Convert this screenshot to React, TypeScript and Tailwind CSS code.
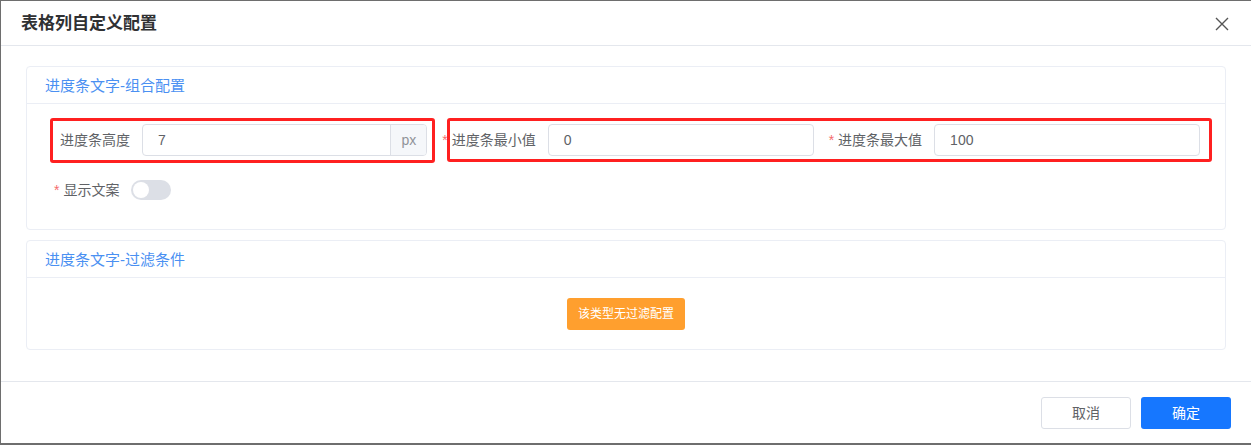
import React from "react";

const font = { fontFamily: '"Liberation Sans", "Noto Sans CJK SC", sans-serif' };

const Star = () => <span className="mr-[4px] text-[#f56c6c]">*</span>;

const TextInput = ({ value, suffix }: { value: string; suffix?: string }) => (
  <div className="flex h-[32px] flex-1 overflow-hidden rounded-[4px] border border-[#dcdfe6] bg-white">
    <div className="flex flex-1 items-center px-[15px] text-[14px] text-[#606266]">{value}</div>
    {suffix && (
      <div className="flex w-[36px] items-center justify-center border-l border-[#dcdfe6] bg-[#f5f7fa] text-[14px] text-[#909399]">
        {suffix}
      </div>
    )}
  </div>
);

const FormItem = ({
  label,
  required,
  value,
  suffix,
  offset,
}: {
  label: string;
  required?: boolean;
  value: string;
  suffix?: string;
  offset: string;
}) => (
  <div className={`flex h-[32px] items-center pr-[13px] ${offset}`}>
    <label className="flex items-center pr-[12px] text-[14px] text-[#606266]">
      {required && <Star />}
      {label}
    </label>
    <TextInput value={value} suffix={suffix} />
  </div>
);

const Card = ({ title, children }: { title: string; children: React.ReactNode }) => (
  <div className="rounded-[4px] border border-[#ebeef5] bg-white">
    <div className="flex h-[37px] items-center border-b border-[#ebeef5] pl-[18px] pt-[2px] text-[15px] text-[#4a90f2]">
      {title}
    </div>
    {children}
  </div>
);

export default function App() {
  return (
    <div className="h-[445px] w-[1251px] bg-[#6e6e6e] pl-px pt-px" style={font}>
      <div className="flex h-[442px] w-[1250px] flex-col bg-white">
        <div className="flex h-[45px] items-center justify-between border-b border-[#e4e7ed] pl-[20px] pr-[22px] pt-[2px]">
          <h2 className="text-[17px] font-bold text-[#303133]">表格列自定义配置</h2>
          <svg width="14" height="14" viewBox="0 0 14 14" className="text-[#555]">
            <path d="M1 1L13 13M13 1L1 13" stroke="currentColor" strokeWidth="1.4" />
          </svg>
        </div>

        <div className="flex flex-1 flex-col gap-[10px] border-b border-[#e4e7ed] px-[25px] pt-[20px]">
          <Card title="进度条文字-组合配置">
            <div className="pb-[23px] pl-[27px] pr-[12px] pt-[20px]">
              <div className="relative grid grid-cols-3">
                <FormItem label="进度条高度" value="7" suffix="px" offset="pl-[6px]" />
                <FormItem label="进度条最小值" required value="0" offset="pl-[2px]" />
                <FormItem label="进度条最大值" required value="100" offset="pl-[2px]" />
                <div className="pointer-events-none absolute left-[-4px] top-[-6px] h-[45px] w-[385px] rounded-[3px] border-[3px] border-[#ff2020]" />
                <div className="pointer-events-none absolute left-[393px] top-[-6px] h-[44px] w-[765px] rounded-[3px] border-[3px] border-[#ff2020]" />
              </div>
              <div className="mt-[18px] flex h-[32px] items-center">
                <label className="flex items-center text-[14px] text-[#606266]">
                  <Star />
                  显示文案
                </label>
                <div className="ml-[12px] flex h-[20px] w-[40px] items-center rounded-full bg-[#dcdfe6] px-[2px]">
                  <div className="h-[16px] w-[16px] rounded-full bg-white" />
                </div>
              </div>
            </div>
          </Card>

          <Card title="进度条文字-过滤条件">
            <div className="flex justify-center pb-[19px] pt-[20px]">
              <button className="h-[32px] w-[118px] rounded-[3px] bg-[#ff9f2e] text-[12px] text-white">
                该类型无过滤配置
              </button>
            </div>
          </Card>
        </div>

        <div className="flex h-[61px] items-start justify-end gap-[10px] pr-[20px] pt-[15px]">
          <button className="h-[32px] w-[90px] rounded-[3px] border border-[#dcdfe6] bg-white text-[14px] text-[#606266]">
            取消
          </button>
          <button className="h-[32px] w-[90px] rounded-[3px] bg-[#1677ff] text-[14px] text-white">
            确定
          </button>
        </div>
      </div>
    </div>
  );
}
